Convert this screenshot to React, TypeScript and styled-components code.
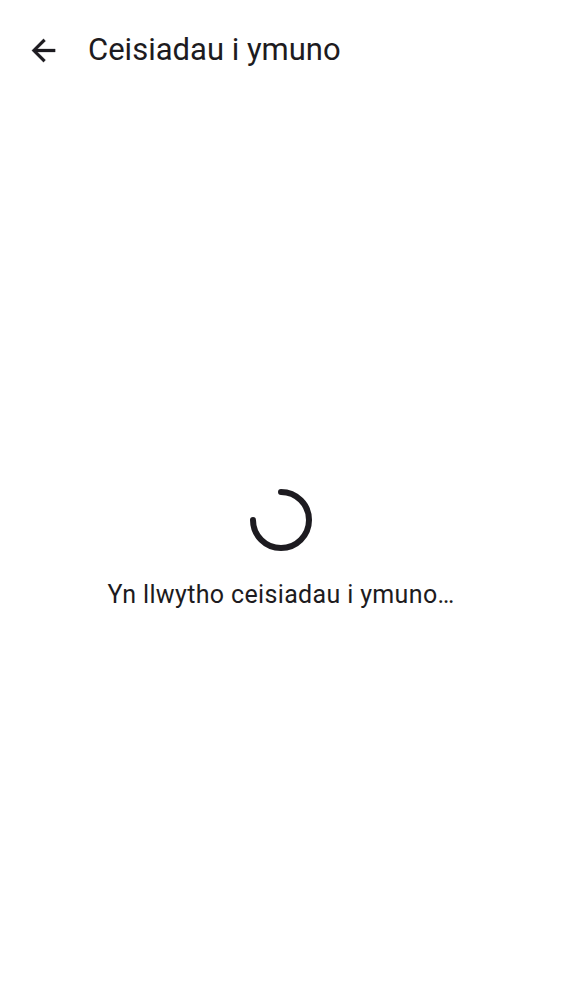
import React from "react";
import styled, { createGlobalStyle } from "styled-components";

const Global = createGlobalStyle`
  html, body { margin: 0; padding: 0; background: #ffffff; }
  body { font-family: Roboto, "Noto Sans", sans-serif; color: #1d1b20; }
`;

const Page = styled.div`
  width: 562px;
  height: 1000px;
  display: flex;
  flex-direction: column;
  background: #ffffff;
`;

const TopBar = styled.header`
  height: 100px;
  display: flex;
  align-items: center;
  padding: 0 0 0 26px;
  gap: 27px;
  box-sizing: border-box;
`;

const IconButton = styled.button`
  width: 35px;
  height: 35px;
  padding: 0;
  border: none;
  background: transparent;
  display: flex;
  align-items: center;
  justify-content: center;
  color: #1d1b20;
`;

const Title = styled.h1`
  margin: 0;
  font-size: 31px;
  font-weight: 400;
  line-height: 40px;
  color: #1d1b20;
`;

const Body = styled.main`
  flex: 1;
  display: flex;
  flex-direction: column;
  align-items: center;
  padding-top: 388px;
`;

const Spinner = styled.svg`
  width: 64px;
  height: 64px;
  display: block;
`;

const Message = styled.p`
  margin: 27px 0 0 0;
  font-size: 25px;
  line-height: 32px;
  letter-spacing: 0.35px;
  color: #1d1b20;
`;

export default function App() {
  return (
    <Page>
      <Global />
      <TopBar>
        <IconButton aria-label="Back">
          <svg width="35" height="35" viewBox="0 0 24 24" fill="currentColor" stroke="currentColor" strokeWidth="0.2">
            <path d="M20 11H7.83l5.59-5.59L12 4l-8 8 8 8 1.41-1.41L7.83 13H20v-2z" />
          </svg>
        </IconButton>
        <Title>Ceisiadau i ymuno</Title>
      </TopBar>
      <Body>
        <Spinner viewBox="0 0 64 64">
          <path
            d="M32 4 A28 28 0 1 1 4 32"
            fill="none"
            stroke="#1d1b20"
            strokeWidth="6"
            strokeLinecap="round"
          />
        </Spinner>
        <Message>Yn llwytho ceisiadau i ymuno…</Message>
      </Body>
    </Page>
  );
}
